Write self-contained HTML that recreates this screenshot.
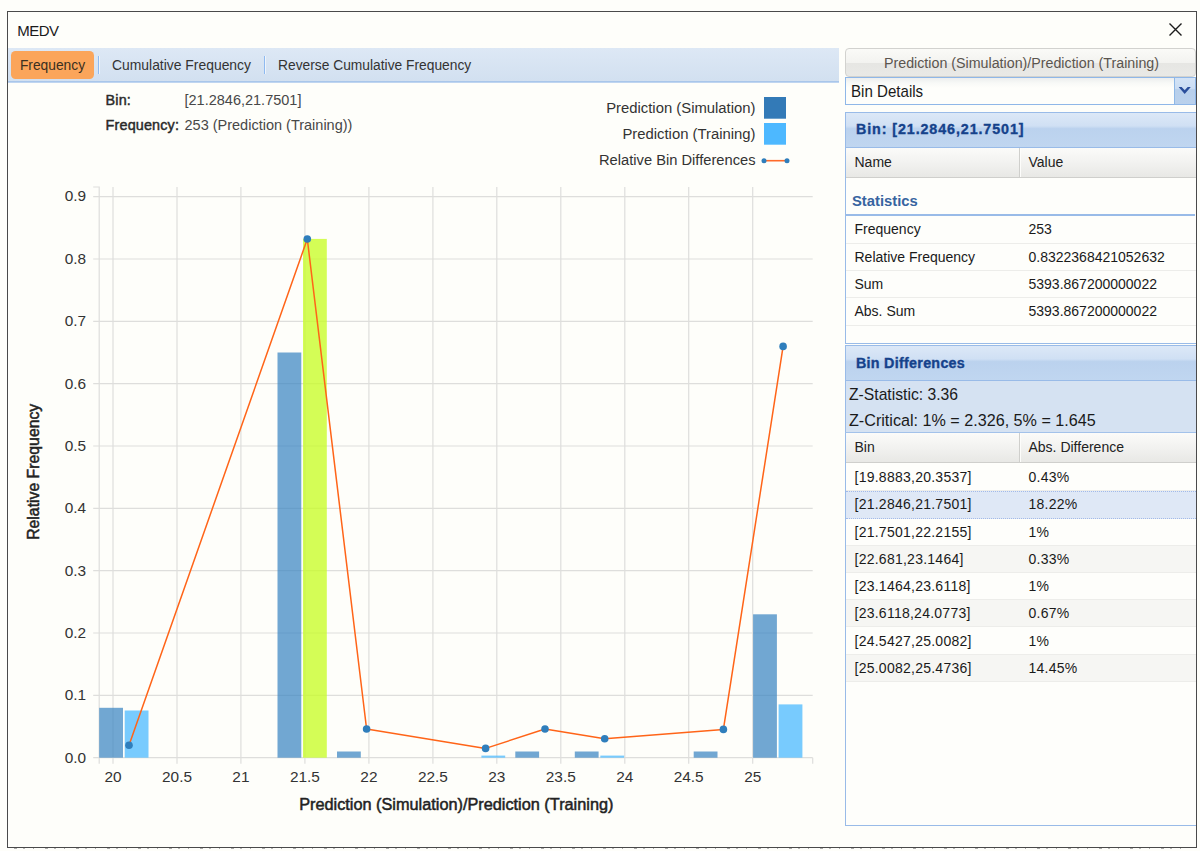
<!DOCTYPE html>
<html lang="en">
<head>
<meta charset="utf-8">
<title>MEDV</title>
<style>
*{box-sizing:border-box;margin:0;padding:0}
html,body{width:1200px;height:851px;overflow:hidden;background:#fefefa;font-family:"Liberation Sans",sans-serif;color:#222}
.abs{position:absolute}
#win{position:absolute;left:7px;top:11px;width:1190px;height:837px;border:1px solid #4a4a4a;background:#fefefa}
#title{position:absolute;left:17.3px;top:20.6px;font-size:15px;letter-spacing:-0.55px;line-height:20px;color:#1a1a1a}
#close{position:absolute;left:1168px;top:22px;width:15px;height:15px}
#tbar{position:absolute;left:8px;top:48px;width:831px;height:34px;background:linear-gradient(#dde8f5,#d2e0f0);border-bottom:1px solid #a9c6ea;box-shadow:0 1px 0 #bfd5f0}
.tab{position:absolute;top:51px;height:28px;line-height:28px;font-size:13.9px;color:#333;white-space:pre}
#tab1{left:11px;width:83px;background:#fba55a;border-radius:4.5px;text-align:center;color:#3a3020;font-size:13.8px;line-height:29.6px}
.sep{position:absolute;top:56px;width:1px;height:18px;background:#8fbaf0;box-shadow:1px 0 0 #eef4fb}
.info{position:absolute;font-size:13.6px;line-height:18px;white-space:pre;color:#484848}
.info b{color:#2a2a2a;font-weight:normal;font-size:14.4px;-webkit-text-stroke:0.45px #2a2a2a;letter-spacing:0.15px}
</style>
</head>
<body>
<div id="win"></div>
<div class="abs" style="left:14px;top:848px;width:1178px;height:1px;opacity:.4;background:repeating-linear-gradient(90deg,#333 0 3px,transparent 3px 9px,#555 9px 11px,transparent 11px 19px,#333 19px 20px,transparent 20px 31px)"></div>
<div id="title">MEDV</div>
<svg id="close" viewBox="0 0 15 15"><path d="M1.5 1.5 L13.5 13.5 M13.5 1.5 L1.5 13.5" stroke="#1c1c1c" stroke-width="1.4" fill="none"/></svg>

<div id="tbar"></div>
<div class="tab" id="tab1">Frequency</div>
<div class="sep" style="left:98px"></div>
<div class="tab" style="left:112px">Cumulative Frequency</div>
<div class="sep" style="left:264px"></div>
<div class="tab" style="left:278px;top:51.6px;font-size:13.8px">Reverse Cumulative Frequency</div>

<div class="info" style="left:105.6px;top:91px"><b>Bin:</b></div>
<div class="info" style="left:184.5px;top:91px;font-size:14.5px">[21.2846,21.7501]</div>
<div class="info" style="left:105.6px;top:115.8px"><b>Frequency:</b></div>
<div class="info" style="left:184.5px;top:115.8px;font-size:14.5px">253 (Prediction (Training))</div>

<!--CHART-->
<svg id="chart" class="abs" style="left:0;top:0" width="840" height="851" viewBox="0 0 840 851" font-family="'Liberation Sans',sans-serif">
<g stroke="#dededc" stroke-width="1.2" fill="none">
<path d="M113.0 187.0 V763.7"/>
<path d="M177.0 187.0 V763.7"/>
<path d="M240.9 187.0 V763.7"/>
<path d="M304.9 187.0 V763.7"/>
<path d="M368.9 187.0 V763.7"/>
<path d="M432.9 187.0 V763.7"/>
<path d="M496.8 187.0 V763.7"/>
<path d="M560.8 187.0 V763.7"/>
<path d="M624.8 187.0 V763.7"/>
<path d="M688.7 187.0 V763.7"/>
<path d="M752.7 187.0 V763.7"/>
<path d="M93.2 757.7 H812.7"/>
<path d="M93.2 695.4 H812.7"/>
<path d="M93.2 633.0 H812.7"/>
<path d="M93.2 570.7 H812.7"/>
<path d="M93.2 508.3 H812.7"/>
<path d="M93.2 446.0 H812.7"/>
<path d="M93.2 383.7 H812.7"/>
<path d="M93.2 321.3 H812.7"/>
<path d="M93.2 259.0 H812.7"/>
<path d="M93.2 196.6 H812.7"/>
<path d="M93.2 187.0 H99.2 V763.7"/>
<path d="M812.7 757.7 V763.7"/>
</g>
<g>
<rect x="99.2" y="707.8" width="23.8" height="49.9" fill="#3a85c2" fill-opacity="0.72"/>
<rect x="277.5" y="352.5" width="23.8" height="405.2" fill="#3a85c2" fill-opacity="0.72"/>
<rect x="337.0" y="751.5" width="23.8" height="6.2" fill="#3a85c2" fill-opacity="0.72"/>
<rect x="515.3" y="751.5" width="23.8" height="6.2" fill="#3a85c2" fill-opacity="0.72"/>
<rect x="574.8" y="751.5" width="23.8" height="6.2" fill="#3a85c2" fill-opacity="0.72"/>
<rect x="693.7" y="751.5" width="23.8" height="6.2" fill="#3a85c2" fill-opacity="0.72"/>
<rect x="753.1" y="614.3" width="23.8" height="143.4" fill="#3a85c2" fill-opacity="0.72"/>
<rect x="124.7" y="710.5" width="23.8" height="47.2" fill="#52bdff" fill-opacity="0.78"/>
<rect x="303.0" y="238.9" width="23.8" height="518.8" fill="#c8fc28" fill-opacity="0.78"/>
<rect x="481.4" y="755.6" width="23.8" height="2.1" fill="#52bdff" fill-opacity="0.78"/>
<rect x="600.3" y="755.6" width="23.8" height="2.1" fill="#52bdff" fill-opacity="0.78"/>
<rect x="778.6" y="704.4" width="23.8" height="53.3" fill="#52bdff" fill-opacity="0.78"/>
</g>
<polyline fill="none" stroke="#ff6418" stroke-width="1.5" stroke-linejoin="round" points="129,745.3 307.3,239 366.6,729 485.6,748.4 545,729 604.7,738.8 723.4,729.4 783.1,346.4"/>
<g fill="#2f7ebc">
<circle cx="129" cy="745.3" r="3.8"/>
<circle cx="307.3" cy="239" r="3.8"/>
<circle cx="366.6" cy="729" r="3.8"/>
<circle cx="485.6" cy="748.4" r="3.8"/>
<circle cx="545" cy="729" r="3.8"/>
<circle cx="604.7" cy="738.8" r="3.8"/>
<circle cx="723.4" cy="729.4" r="3.8"/>
<circle cx="783.1" cy="346.4" r="3.8"/>
</g>
<g font-size="15.4" fill="#333" text-anchor="middle">
<text x="113.0" y="782">20</text>
<text x="177.0" y="782">20.5</text>
<text x="240.9" y="782">21</text>
<text x="304.9" y="782">21.5</text>
<text x="368.9" y="782">22</text>
<text x="432.9" y="782">22.5</text>
<text x="496.8" y="782">23</text>
<text x="560.8" y="782">23.5</text>
<text x="624.8" y="782">24</text>
<text x="688.7" y="782">24.5</text>
<text x="752.7" y="782">25</text>
</g>
<g font-size="15.4" fill="#333" text-anchor="end">
<text x="86.2" y="762.5">0.0</text>
<text x="86.2" y="700.2">0.1</text>
<text x="86.2" y="637.8">0.2</text>
<text x="86.2" y="575.5">0.3</text>
<text x="86.2" y="513.1">0.4</text>
<text x="86.2" y="450.8">0.5</text>
<text x="86.2" y="388.5">0.6</text>
<text x="86.2" y="326.1">0.7</text>
<text x="86.2" y="263.8">0.8</text>
<text x="86.2" y="201.4">0.9</text>
</g>
<text x="456.3" y="809.8" font-size="16.3" fill="#222" stroke="#222" stroke-width="0.5" text-anchor="middle">Prediction (Simulation)/Prediction (Training)</text>
<text transform="translate(38.5,471.8) rotate(-90)" font-size="15.8" fill="#222" stroke="#222" stroke-width="0.5" text-anchor="middle">Relative Frequency</text>
<g font-size="14.85" fill="#333" text-anchor="end">
<text x="755.5" y="113">Prediction (Simulation)</text>
<text x="755.5" y="139">Prediction (Training)</text>
<text x="755.5" y="165" font-size="14.7">Relative Bin Differences</text>
</g>
<rect x="764" y="97" width="22" height="21.7" fill="#337ab7"/>
<rect x="764" y="123" width="22" height="21.7" fill="#4db8ff"/>
<path d="M764 160.7 H787" stroke="#ff6a2a" stroke-width="1.6"/>
<circle cx="764" cy="160.7" r="2.5" fill="#2f7ebc"/><circle cx="787" cy="160.7" r="2.5" fill="#2f7ebc"/>
</svg>
<!--/CHART-->
<!--RIGHT-->
<style>
#pbtn{position:absolute;left:845px;top:48px;width:351px;height:29px;border:1px solid #d2d2cf;border-radius:4px;background:linear-gradient(#fafaf7 0%,#f3f3f0 50%,#e6e6e3 51%,#e9e9e6 100%);font-size:14.25px;line-height:28px;text-align:center;color:#5b554f;white-space:pre;padding-left:2px}
#combo{position:absolute;left:845px;top:77px;width:351px;height:28px;border:1px solid #8fb7e8;background:linear-gradient(#eceeee 0,#f8f9f7 5px,#fefefb 10px);font-size:15.1px;line-height:27px;padding-left:5px;color:#1a1a1a}
#trig{position:absolute;left:1174px;top:78px;width:21px;height:26px;background:linear-gradient(#d3e3f6 0%,#cbddf3 40%,#b7cfeb 45%,#bad1ec 100%);border-left:1px solid #8fb8e6;border-radius:0 2px 0 0}
.phead{position:absolute;left:845px;width:351px;border:1px solid #99bbe8;border-right:0;background:linear-gradient(#dce8f7 0%,#d0e0f4 38%,#bbd2ee 46%,#c0d6f0 100%);color:#15428b;font-weight:bold;white-space:pre;-webkit-text-stroke:0.35px #15428b}
.ghead{position:absolute;left:846px;width:350px;height:30px;background:linear-gradient(#fbfbf9 0%,#f2f2f0 50%,#e8e8e5 100%);border-bottom:1px solid #cfcfcc;font-size:14px;color:#222}
.ghead span{position:absolute;top:-0.8px;line-height:30px}
.ghead i{position:absolute;left:173px;top:0;width:1px;height:29px;background:#cfcfcc;box-shadow:1px 0 0 #fdfdfb}
.pbody{position:absolute;left:845px;width:351px;border:1px solid #99bbe8;border-top:0;border-right:0;background:#fefefb}
.row{position:absolute;left:846px;width:350px;height:27px;border-bottom:1px solid #ededea;font-size:14px;line-height:26px;color:#1a1a1a;white-space:pre}
.row.alt{background:#f6f6f3}
.row.sel{background:#dfe8f6;border-bottom:1px dotted #a3bae9;border-top:1px dotted #a3bae9;line-height:24px}
.row span{position:absolute;top:0}
.rg{letter-spacing:0.25px}.rg + .c2{letter-spacing:0.25px}
.c1{left:8.5px}.c2{left:182.5px}
</style>
<div id="pbtn">Prediction (Simulation)/Prediction (Training)</div>
<div id="combo"><span style="display:inline-block;transform:scaleY(1.14);transform-origin:0 74%">Bin Details</span></div>
<div id="trig"><svg width="21" height="26" viewBox="1174 78 21 26" style="position:absolute;left:-1px;top:0"><polygon points="1178.6,87.1 1181.7,87.1 1184.7,90.3 1187.7,87.1 1190.8,87.1 1184.7,94" fill="#2a4e9b"/></svg></div>

<div class="phead" style="top:112px;height:36px;font-size:14.3px;line-height:32.8px;padding-left:10px;letter-spacing:0.9px">Bin: [21.2846,21.7501]</div>
<div class="pbody" style="top:148px;height:196px"></div>
<div class="ghead" style="top:147.5px"><span style="left:8.5px">Name</span><i></i><span style="left:182.5px">Value</span></div>
<div class="abs" style="left:852px;top:190.8px;font-size:14.8px;line-height:20px;font-weight:bold;color:#3764a0">Statistics</div>
<div class="abs" style="left:846px;top:214px;width:349px;height:2px;background:#99bbe8"></div>
<div class="row" style="top:216px;height:28px"><span class="c1">Frequency</span><span class="c2">253</span></div>
<div class="row" style="top:244px"><span class="c1">Relative Frequency</span><span class="c2">0.8322368421052632</span></div>
<div class="row" style="top:271px"><span class="c1">Sum</span><span class="c2">5393.867200000022</span></div>
<div class="row" style="top:298px;height:28px"><span class="c1">Abs. Sum</span><span class="c2">5393.867200000022</span></div>

<div class="phead" style="top:345px;height:36px;font-size:14.3px;line-height:35.2px;padding-left:10px;letter-spacing:0.28px">Bin Differences</div>
<div class="abs" style="left:845px;top:381px;width:351px;height:52px;background:#d5e2f2;border-left:1px solid #99bbe8;border-bottom:1px solid #a3c2ea"></div>
<div class="abs" style="left:849px;top:384.5px;font-size:15.7px;line-height:20px;color:#1a1a1a;white-space:pre">Z-Statistic: 3.36</div>
<div class="abs" style="left:849px;top:410.4px;font-size:16.15px;line-height:20px;color:#1a1a1a;white-space:pre">Z-Critical: 1% = 2.326, 5% = 1.645</div>
<div class="pbody" style="top:433px;height:393px"></div>
<div class="ghead" style="top:433px"><span style="left:8.5px">Bin</span><i></i><span style="left:182.5px">Abs. Difference</span></div>
<div class="row" style="top:463.5px"><span class="c1 rg">[19.8883,20.3537]</span><span class="c2">0.43%</span></div>
<div class="row sel" style="top:490.5px;height:28px"><span class="c1 rg">[21.2846,21.7501]</span><span class="c2">18.22%</span></div>
<div class="row" style="top:518.6px"><span class="c1 rg">[21.7501,22.2155]</span><span class="c2">1%</span></div>
<div class="row alt" style="top:545.9px"><span class="c1 rg">[22.681,23.1464]</span><span class="c2">0.33%</span></div>
<div class="row" style="top:573.2px"><span class="c1 rg">[23.1464,23.6118]</span><span class="c2">1%</span></div>
<div class="row alt" style="top:600.4px"><span class="c1 rg">[23.6118,24.0773]</span><span class="c2">0.67%</span></div>
<div class="row" style="top:627.7px"><span class="c1 rg">[24.5427,25.0082]</span><span class="c2">1%</span></div>
<div class="row alt" style="top:655px"><span class="c1 rg">[25.0082,25.4736]</span><span class="c2">14.45%</span></div>

<!--/RIGHT-->
</body>
</html>
